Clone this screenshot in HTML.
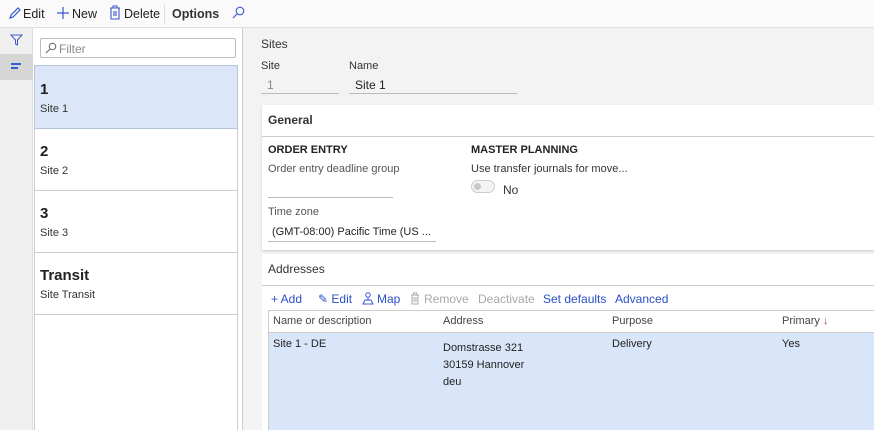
<!DOCTYPE html>
<html><head><style>
*{box-sizing:border-box;margin:0;padding:0}
body{width:874px;height:430px;overflow:hidden;font-family:"Liberation Sans",sans-serif;font-size:12px;color:#333;background:#f3f3f3;position:relative}
.a{position:absolute}
.tb{left:0;top:0;width:874px;height:28px;background:#fafafa;border-bottom:1px solid #e0e0e0}
.tb span{position:absolute;top:7px;font-size:12.5px;color:#222}
.blue{color:#2b50c8}
.gray{color:#a8a8a8}
</style></head><body>
<div class="a tb">
<svg class="a" style="left:8px;top:6px" width="14" height="14" viewBox="0 0 14 14"><path d="M2 12 L3 9 L10 2 L12 4 L5 11 Z" fill="none" stroke="#3a5bd0" stroke-width="1.2"/></svg>
<span style="left:23px">Edit</span>
<svg class="a" style="left:56px;top:6px" width="14" height="14"><path d="M7 1V13M1 7H13" stroke="#3a5bd0" stroke-width="1.2"/></svg>
<span style="left:72px">New</span>
<svg class="a" style="left:109px;top:5px" width="12" height="15"><path d="M1 3H11M4 3V1H8V3M2 3V14H10V3M5 6V11M7 6V11" fill="none" stroke="#3a5bd0" stroke-width="1.1"/></svg>
<span style="left:124px">Delete</span>
<div class="a" style="left:164px;top:4px;width:1px;height:20px;background:#ddd"></div>
<span style="left:172px;font-weight:bold;color:#333">Options</span>
<svg class="a" style="left:232px;top:6px" width="13" height="13"><circle cx="8" cy="5" r="3.8" fill="none" stroke="#3a5bd0" stroke-width="1.1"/><path d="M5 8L1 12" stroke="#3a5bd0" stroke-width="1.2"/></svg>
</div>
<div class="a" style="left:0;top:28px;width:33px;height:402px;background:#f0f0f0;border-right:1px solid #ddd"></div>
<svg class="a" style="left:10px;top:34px" width="13" height="12"><path d="M1 1H12L7.5 6V11L5.5 10V6Z" fill="none" stroke="#3a5bd0" stroke-width="1"/></svg>
<div class="a" style="left:0;top:54px;width:33px;height:26px;background:#d6d6d6"></div>
<div class="a" style="left:11px;top:63px;width:10px;height:1.5px;background:#3a5bd0"></div>
<div class="a" style="left:11px;top:67px;width:7px;height:1.5px;background:#3a5bd0"></div>
<div class="a" style="left:33px;top:28px;width:210px;height:402px;background:#fff;border-right:1px solid #ccc"></div>
<div class="a" style="left:40px;top:38px;width:196px;height:20px;border:1px solid #bbb;border-radius:2px"></div>
<svg class="a" style="left:45px;top:42px" width="12" height="12"><circle cx="7.5" cy="4.5" r="3.3" fill="none" stroke="#666" stroke-width="1"/><path d="M5 7L1 11" stroke="#666"/></svg>
<span class="a" style="left:59px;top:42px;color:#888">Filter</span>
<div class="a" style="left:34px;top:65px;width:204px;height:365px;border-left:1px solid #ccc;border-right:1px solid #ccc"></div>
<div class="a" style="left:34px;top:65px;width:204px;height:64px;background:#dbe6f8;border:1px solid #b8c4d8"></div>
<div class="a" style="left:34px;top:190px;width:204px;height:1px;background:#ccc"></div>
<div class="a" style="left:34px;top:252px;width:204px;height:1px;background:#ccc"></div>
<div class="a" style="left:34px;top:314px;width:204px;height:1px;background:#ccc"></div>
<b class="a" style="left:40px;top:81px;font-size:15px;color:#222">1</b><span class="a" style="left:40px;top:103px;font-size:11px">Site 1</span>
<b class="a" style="left:40px;top:143px;font-size:15px;color:#222">2</b><span class="a" style="left:40px;top:165px;font-size:11px">Site 2</span>
<b class="a" style="left:40px;top:205px;font-size:15px;color:#222">3</b><span class="a" style="left:40px;top:227px;font-size:11px">Site 3</span>
<b class="a" style="left:40px;top:267px;font-size:15px;color:#222">Transit</b><span class="a" style="left:40px;top:289px;font-size:11px">Site Transit</span>
<span class="a" style="left:261px;top:37px">Sites</span>
<span class="a" style="left:261px;top:60px;font-size:11px">Site</span>
<span class="a" style="left:349px;top:60px;font-size:11px">Name</span>
<span class="a" style="left:267px;top:78px;color:#888">1</span>
<div class="a" style="left:261px;top:93px;width:78px;height:1px;background:#bbb"></div>
<span class="a" style="left:355px;top:78px;color:#222">Site 1</span>
<div class="a" style="left:349px;top:93px;width:168px;height:1px;background:#bbb"></div>
<div class="a" style="left:262px;top:105px;width:612px;height:145px;background:#fff;box-shadow:0 1px 2px #ccc"></div>
<b class="a" style="left:268px;top:113px;font-weight:600;color:#333">General</b>
<div class="a" style="left:262px;top:136px;width:612px;height:1px;background:#ccc"></div>
<b class="a" style="left:268px;top:144px;font-size:11px;color:#222">ORDER ENTRY</b>
<span class="a" style="left:268px;top:163px;font-size:11px;color:#555">Order entry deadline group</span>
<div class="a" style="left:268px;top:197px;width:125px;height:1px;background:#bbb"></div>
<span class="a" style="left:268px;top:206px;font-size:11px;color:#555">Time zone</span>
<span class="a" style="left:272px;top:226px;font-size:11px;color:#222">(GMT-08:00) Pacific Time (US ...</span>
<div class="a" style="left:268px;top:241px;width:168px;height:1px;background:#bbb"></div>
<b class="a" style="left:471px;top:144px;font-size:11px;color:#222">MASTER PLANNING</b>
<span class="a" style="left:471px;top:163px;font-size:11px;color:#333">Use transfer journals for move...</span>
<div class="a" style="left:471px;top:180px;width:24px;height:13px;border:1px solid #ccc;border-radius:7px;background:#f4f4f4"></div>
<div class="a" style="left:474px;top:183px;width:7px;height:7px;border-radius:50%;background:#c8c8c8"></div>
<span class="a" style="left:503px;top:183px;font-size:12px">No</span>
<div class="a" style="left:262px;top:254px;width:612px;height:176px;background:#fff"></div>
<span class="a" style="left:268px;top:262px;color:#333">Addresses</span>
<div class="a" style="left:262px;top:285px;width:612px;height:1px;background:#ccc"></div>
<span class="a blue" style="left:271px;top:292px">+ Add</span>
<span class="a blue" style="left:318px;top:292px">✎ Edit</span>
<svg class="a" style="left:362px;top:292px" width="12" height="13"><circle cx="6" cy="3" r="2.3" fill="none" stroke="#3a5bd0"/><path d="M6 5.5V9M1 12L3 8H9L11 12Z" fill="none" stroke="#3a5bd0"/></svg>
<span class="a blue" style="left:377px;top:292px">Map</span>
<svg class="a" style="left:410px;top:292px" width="10" height="13"><path d="M1 3H9M3.5 3V1H6.5V3M2 3V12H8V3M4 5V10M6 5V10" fill="none" stroke="#aaa"/></svg>
<span class="a gray" style="left:424px;top:292px">Remove</span>
<span class="a gray" style="left:478px;top:292px">Deactivate</span>
<span class="a blue" style="left:543px;top:292px">Set defaults</span>
<span class="a blue" style="left:615px;top:292px">Advanced</span>
<div class="a" style="left:268px;top:310px;width:606px;height:120px;border:1px solid #ccc;border-right:none"></div>
<div class="a" style="left:269px;top:332px;width:605px;height:98px;background:#d9e5f8;border-top:1px solid #ccc"></div>
<span class="a" style="left:273px;top:315px;font-size:11px;color:#444">Name or description</span>
<span class="a" style="left:443px;top:315px;font-size:11px;color:#444">Address</span>
<span class="a" style="left:612px;top:315px;font-size:11px;color:#444">Purpose</span>
<span class="a" style="left:782px;top:315px;font-size:11px;color:#444">Primary <span style="color:#a44">↓</span></span>
<span class="a" style="left:273px;top:338px;font-size:11px;color:#222">Site 1 - DE</span>
<span class="a" style="left:443px;top:340px;font-size:11px;color:#222;line-height:17px">Domstrasse 321<br>30159 Hannover<br>deu</span>
<span class="a" style="left:612px;top:338px;font-size:11px;color:#222">Delivery</span>
<span class="a" style="left:782px;top:338px;font-size:11px;color:#222">Yes</span>
</body></html>
